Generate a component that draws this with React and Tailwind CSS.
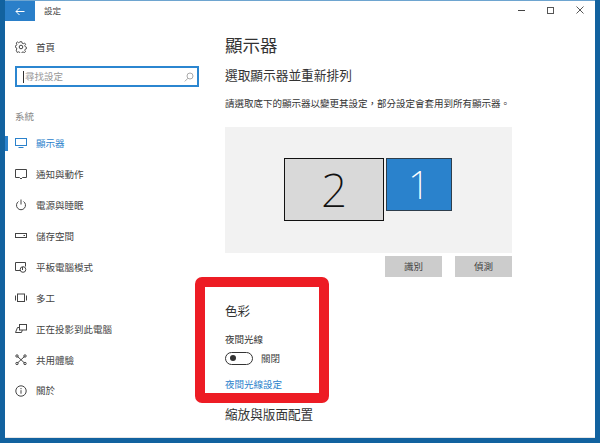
import React from "react";

const S = { fill: "none", stroke: "#444", strokeWidth: 1 };
const Ic = ({ children }) => (
  <svg width="12" height="12" viewBox="0 0 12 12" className="shrink-0">
    {children}
  </svg>
);
const icons = {
  display: <g fill="none" stroke="#2b82cc"><rect x="0.5" y="1.5" width="11" height="7" /><path d="M3.5 10.5h5" /></g>,
  notify: <path {...S} d="M.5 1.5h11v8H7.5L6 11 4.5 9.500h-4z" />,
  power: <g {...S}><path d="M3.500 2.500a4.500 4.500 0 1 0 5 0" /><path d="M6 .5v5" /></g>,
  storage: <g {...S}><rect x=".5" y="3.500" width="11" height="4" /><path d="M8.500 5.500h1.500" /></g>,
  tablet: <g {...S}><path d="M6 9.500H.5v-8h10v4" /><circle cx="8" cy="8.500" r="2.800" fill="#fff" /><path d="M7.500 6v3" /></g>,
  multi: <g {...S}><rect x="2.500" y="2" width="7" height="7.500" /><path d="M.5 3.500v5M11.500 3.500v5" /></g>,
  project: <g {...S}><rect x="4.500" y="1.500" width="7" height="5.500" /><path d="M4.500 4.500h-2L.5 9.500h6l.8-2.500" /></g>,
  share: <g {...S}><path d="M2.500 2.500l7 6.500M9.500 2.500l-7 6.500" /><circle cx="2" cy="2" r="1.200" /><circle cx="10" cy="2" r="1.200" /><circle cx="2" cy="9.500" r="1.200" /><circle cx="10" cy="9.500" r="1.200" /></g>,
  about: <g {...S}><circle cx="6" cy="6" r="5.200" /><path d="M6 5.200v3.500M6 3v1.200" /></g>,
};

const nav = [
  ["display", "顯示器"],
  ["notify", "通知與動作"],
  ["power", "電源與睡眠"],
  ["storage", "儲存空間"],
  ["tablet", "平板電腦模式"],
  ["multi", "多工"],
  ["project", "正在投影到此電腦"],
  ["share", "共用體驗"],
  ["about", "關於"],
];

export default function App() {
  return (
    <div
      className="relative w-[600px] h-[443px] overflow-hidden bg-[#12629f] text-[#444]"
      style={{ fontFamily: '"Noto Sans CJK TC", "Noto Sans", sans-serif' }}
    >
      <div className="mx-[5px] h-[438px] bg-white border-t border-t-[#6ea5d0] border-b border-b-[#e6e6e6] flex flex-col overflow-hidden">
        {/* Title bar */}
        <div className="flex items-start h-[20px] shrink-0">
          <div className="w-[30px] h-[20px] bg-[#2a7fc9] flex items-center justify-center">
            <svg width="10" height="9" viewBox="0 0 10 9" fill="none" stroke="#fff" strokeWidth="1">
              <path d="M9.500 4.500H1M4.500 1L1 4.500 4.500 8" />
            </svg>
          </div>
          <span className="ml-[9px] text-[8.500px] leading-[18px]">設定</span>
          <div className="ml-auto flex items-center h-[18px]">
            <div className="w-[30px] flex justify-center"><div className="w-[7px] h-px bg-[#444]" /></div>
            <div className="w-[29px] flex justify-center"><div className="w-[7px] h-[7px] border border-[#555]" /></div>
            <div className="w-[30px] flex justify-center">
              <svg width="8" height="8" viewBox="0 0 8 8" stroke="#444" strokeWidth="0.900"><path d="M.5.5l7 7M7.500.5l-7 7" /></svg>
            </div>
          </div>
        </div>

        <div className="flex flex-1 min-h-0">
          {/* Sidebar */}
          <aside className="w-[220px] shrink-0">
            <div className="flex items-center h-[16px] mt-[18px] pl-[10px] gap-[9px]">
              <svg width="12" height="12" viewBox="0 0 12 12" fill="none" stroke="#444" strokeWidth="1">
                <circle cx="6" cy="6" r="1.800" />
                <path d="M5 .6h2l.3 1.500 1.300.6 1.300-.8 1.200 1.400-.9 1.200.4 1.400 1.400.6v1.600l-1.400.5-.4 1.300.8 1.300-1.400 1.200-1.200-.9-1.300.5-.3 1.300H5l-.3-1.400-1.300-.5-1.300.8L.9 9.600l.8-1.200-.5-1.400L0 6.500V5l1.200-.4.5-1.300-.8-1.300L2.200.8l1.300.8 1.200-.5z" transform="translate(.3 .2) scale(.93)" />
              </svg>
              <span className="text-[9.500px] leading-[16px]">首頁</span>
            </div>
            <div className="mt-[11px] mx-[10px] w-[184px] h-[21px] border-2 border-[#2b86d0] flex items-center pl-[6px] pr-[3px] box-border">
              <div className="w-px h-[12px] bg-[#333]" />
              <span className="text-[9.500px] text-[#999] ml-px">尋找設定</span>
              <svg className="ml-auto" width="10" height="10" viewBox="0 0 10 10" fill="none" stroke="#aaa" strokeWidth="1">
                <circle cx="6" cy="4" r="3" /><path d="M4 6.200L.8 9.400" />
              </svg>
            </div>
            <div className="mt-[21px] pl-[10px] text-[9.500px] leading-[16px] text-[#888]">系統</div>
            <div className="mt-[4px] flex flex-col">
              {nav.map(([k, t], i) => (
                <div key={k} className="relative h-[30.900px] flex items-center pl-[10px] gap-[9px]">
                  {i === 0 && <div className="absolute left-0 top-[8px] w-[3px] h-[15px] bg-[#2b82cc]" />}
                  <Ic>{icons[k]}</Ic>
                  <span className={`text-[9.500px] ${i === 0 ? "text-[#2b82cc]" : "text-[#444]"}`}>{t}</span>
                </div>
              ))}
            </div>
          </aside>

          {/* Main */}
          <main className="flex-1 min-w-0 pr-[83px]">
            <h1 className="text-[17.500px] leading-[26px] font-normal mt-[11px] text-[#333]">顯示器</h1>
            <h2 className="text-[12.700px] leading-[18px] font-normal mt-[8px] text-[#333]">選取顯示器並重新排列</h2>
            <p className="text-[9.500px] leading-[14px] mt-[12px] whitespace-nowrap text-[#333]">請選取底下的顯示器以變更其設定，部分設定會套用到所有顯示器。</p>
            <div className="relative mt-[17px] h-[126px] w-[287px] bg-[#f2f2f2]">
              <div className="absolute left-[59px] top-[31px] w-[100px] h-[63px] bg-[#d9d9d9] border border-[#111] flex items-center justify-center text-[46px] text-[#111]" style={{ fontFamily: '"Noto Sans", sans-serif', fontWeight: 200 }}>2</div>
              <div className="absolute left-[161px] top-[31px] w-[66px] h-[53px] bg-[#2a82cc] border border-[#2e3e4c] flex items-center justify-center text-[39px] text-white" style={{ fontFamily: '"Noto Sans", sans-serif', fontWeight: 200 }}>1</div>
            </div>
            <div className="mt-[3px] w-[287px] flex justify-end gap-[13px]">
              <div className="w-[57px] h-[21px] bg-[#cccccc] flex items-center justify-center text-[9.500px]">識別</div>
              <div className="w-[57px] h-[21px] bg-[#cccccc] flex items-center justify-center text-[9.500px]">偵測</div>
            </div>
            <h2 className="text-[12.500px] leading-[18px] font-normal mt-[25px] text-[#333]">色彩</h2>
            <div className="text-[9.500px] leading-[14px] mt-[12px] text-[#333]">夜間光線</div>
            <div className="flex items-center gap-[8px] mt-[5px]">
              <div className="w-[28px] h-[13px] rounded-full border-[1.500px] border-[#333] flex items-center pl-[4px] box-border">
                <div className="w-[6px] h-[6px] rounded-full bg-[#333]" />
              </div>
              <span className="text-[9.500px]">關閉</span>
            </div>
            <div className="text-[9.500px] leading-[14px] mt-[12px] text-[#2b82cc]">夜間光線設定</div>
            <h2 className="text-[12.600px] leading-[18px] font-normal mt-[14px] whitespace-nowrap text-[#333]">縮放與版面配置</h2>
          </main>
        </div>
      </div>

      {/* Red annotation rectangle */}
      <div className="absolute left-[195px] top-[277px] w-[134px] h-[126px] border-[10px] border-[#ed1c24] rounded-[7px]" />
    </div>
  );
}
